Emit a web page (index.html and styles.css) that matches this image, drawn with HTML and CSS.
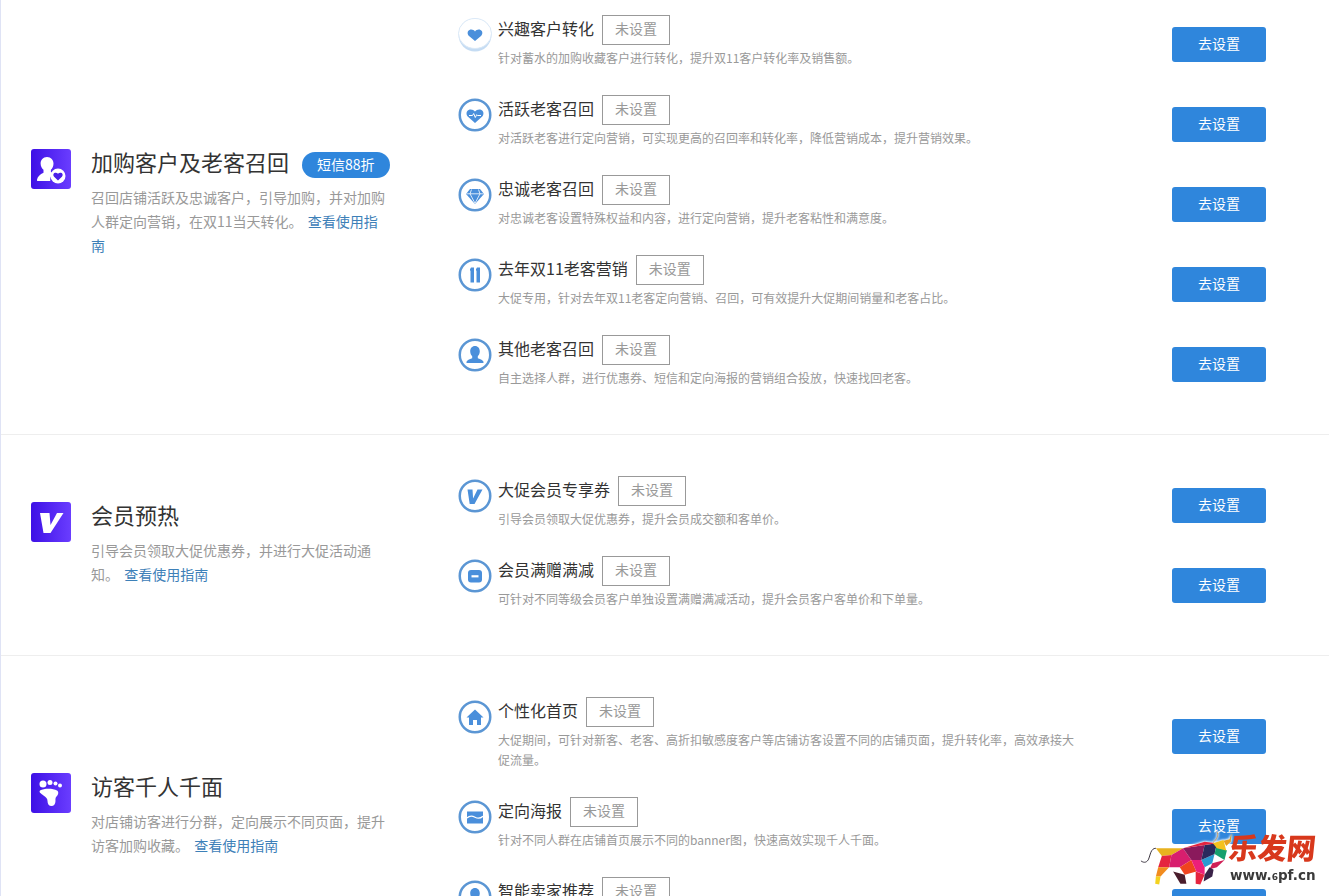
FILE: index.html
```html
<!DOCTYPE html>
<html lang="zh-CN">
<head>
    <meta charset="UTF-8">
    <title>双11客户运营</title>
    <link rel="stylesheet" href="styles.css">
</head>
<body>
    <div class="page">
        <!-- 加购客户及老客召回 -->
        <section class="group">
            <div class="group-info">
                <div class="group-icon">
                    <svg viewBox="0 0 40 40" width="40" height="40">
                        <path fill="#fff" d="M16 8c4 0 6.500 3 6.500 6.500 0 3-1.200 5-2.600 6.200v2.200c1 .5 1.900 1 2.600 1.300-2 1.500-3.300 3.800-3.300 6.300 0 .5 0 1 .1 1.500H7c-.8 0-1.200-.5-1-1.300.5-3 3-5.500 6.500-7v-3c-1.500-1.200-2.900-3.200-2.900-6.200C9.600 11 12 8 16 8z"/>
                        <circle cx="27" cy="27" r="7.500" fill="#fff"/>
                        <path fill="#4a1fe8" d="M27 31.500l-3.900-3.800c-1.100-1.100-1-2.800.2-3.600 1.200-.8 2.700-.5 3.700.7 1-1.200 2.500-1.500 3.700-.7 1.200.8 1.300 2.500.2 3.600z"/>
                    </svg>
                </div>
                <div class="group-text">
                    <div class="group-title">
                        <h2>加购客户及老客召回</h2>
                        <span class="badge">短信88折</span>
                    </div>
                    <p>召回店铺活跃及忠诚客户，引导加购，并对加购人群定向营销，在双11当天转化。 <a href="#">查看使用指南</a></p>
                </div>
            </div>
            <div class="group-list">
                <div class="item">
                    <svg class="item-icon" viewBox="0 0 34 34" width="34" height="34">
                        <circle cx="17" cy="17" r="16.500" fill="#c5dcf3"/>
                        <ellipse cx="17" cy="15.500" rx="16.500" ry="15" fill="#fff" stroke="#dbe9f7"/>
                        <path fill="#4a8fdb" d="M17 23l-6-5c-2-2-1.700-5 .5-6 2-.9 4.200-.2 5.500 1.500 1.300-1.700 3.500-2.400 5.500-1.500 2.200 1 2.500 4 .5 6z"/>
                    </svg>
                    <div class="item-body">
                        <div class="item-head"><h3>兴趣客户转化</h3><span class="tag">未设置</span></div>
                        <p>针对蓄水的加购收藏客户进行转化，提升双11客户转化率及销售额。</p>
                    </div>
                    <a class="btn" href="#">去设置</a>
                </div>
                <div class="item">
                    <svg class="item-icon" viewBox="0 0 34 34" width="34" height="34">
                        <circle cx="17" cy="17" r="15.250" fill="#fff" stroke="#5b96d4" stroke-width="2.500"/>
                        <path fill="#4a8fdb" d="M17 25l-7-6.200c-2.200-2.400-1.800-5.700.6-6.900 2.300-1.100 4.900-.3 6.400 1.700 1.500-2 4.100-2.800 6.400-1.700 2.400 1.200 2.800 4.500.6 6.900z"/>
                        <path fill="none" stroke="#fff" d="M11 17.500h3.500l1.200-2 1.600 4 1.400-2.800.8.800H23"/>
                    </svg>
                    <div class="item-body">
                        <div class="item-head"><h3>活跃老客召回</h3><span class="tag">未设置</span></div>
                        <p>对活跃老客进行定向营销，可实现更高的召回率和转化率，降低营销成本，提升营销效果。</p>
                    </div>
                    <a class="btn" href="#">去设置</a>
                </div>
                <div class="item">
                    <svg class="item-icon" viewBox="0 0 34 34" width="34" height="34">
                        <circle cx="17" cy="17" r="15.250" fill="#fff" stroke="#5b96d4" stroke-width="2.500"/>
                        <path fill="#4a8fdb" d="M12 11h10l4 5-9 10-9-10z"/>
                        <path fill="none" stroke="#fff" stroke-width=".8" d="M8.500 15.800h17M13.500 11.500l-1.500 4.300 5 9.500 5-9.500-1.500-4.300"/>
                    </svg>
                    <div class="item-body">
                        <div class="item-head"><h3>忠诚老客召回</h3><span class="tag">未设置</span></div>
                        <p>对忠诚老客设置特殊权益和内容，进行定向营销，提升老客粘性和满意度。</p>
                    </div>
                    <a class="btn" href="#">去设置</a>
                </div>
                <div class="item">
                    <svg class="item-icon" viewBox="0 0 34 34" width="34" height="34">
                        <circle cx="17" cy="17" r="15.250" fill="#fff" stroke="#5b96d4" stroke-width="2.500"/>
                        <path fill="#4a8fdb" d="M13 9.500h3v15h-3.500V12.500l-.5.200v-1.500zM19 9.500h3v15h-3.500V12.500l-.5.200v-1.500z"/>
                    </svg>
                    <div class="item-body">
                        <div class="item-head"><h3>去年双11老客营销</h3><span class="tag">未设置</span></div>
                        <p>大促专用，针对去年双11老客定向营销、召回，可有效提升大促期间销量和老客占比。</p>
                    </div>
                    <a class="btn" href="#">去设置</a>
                </div>
                <div class="item">
                    <svg class="item-icon" viewBox="0 0 34 34" width="34" height="34">
                        <circle cx="17" cy="17" r="15.250" fill="#fff" stroke="#5b96d4" stroke-width="2.500"/>
                        <path fill="#4a8fdb" d="M17 8c3 0 4.800 2.300 4.800 5.200 0 2.200-.9 3.900-2 5v2c2.800 1 5.200 1.800 5.700 3.600.2.800 0 1.200-.8 1.200H9.300c-.8 0-1-.4-.8-1.200.5-1.800 2.900-2.600 5.700-3.600v-2c-1.100-1.100-2-2.800-2-5C12.200 10.300 14 8 17 8z"/>
                    </svg>
                    <div class="item-body">
                        <div class="item-head"><h3>其他老客召回</h3><span class="tag">未设置</span></div>
                        <p>自主选择人群，进行优惠券、短信和定向海报的营销组合投放，快速找回老客。</p>
                    </div>
                    <a class="btn" href="#">去设置</a>
                </div>
            </div>
        </section>

        <!-- 会员预热 -->
        <section class="group">
            <div class="group-info">
                <div class="group-icon">
                    <svg viewBox="0 0 40 40" width="40" height="40">
                        <path fill="#fff" d="M9 11h9.500l1 12L26 11h6.500L19.500 31H12.500z"/>
                    </svg>
                </div>
                <div class="group-text">
                    <div class="group-title">
                        <h2>会员预热</h2>
                    </div>
                    <p>引导会员领取大促优惠券，并进行大促活动通知。 <a href="#">查看使用指南</a></p>
                </div>
            </div>
            <div class="group-list">
                <div class="item">
                    <svg class="item-icon" viewBox="0 0 34 34" width="34" height="34">
                        <circle cx="17" cy="17" r="15.250" fill="#fff" stroke="#5b96d4" stroke-width="2.500"/>
                        <path fill="#4a8fdb" d="M9.500 10.500h5l.6 9 4.400-9h5L16.500 25h-4.800z"/>
                    </svg>
                    <div class="item-body">
                        <div class="item-head"><h3>大促会员专享券</h3><span class="tag">未设置</span></div>
                        <p>引导会员领取大促优惠券，提升会员成交额和客单价。</p>
                    </div>
                    <a class="btn" href="#">去设置</a>
                </div>
                <div class="item">
                    <svg class="item-icon" viewBox="0 0 34 34" width="34" height="34">
                        <circle cx="17" cy="17" r="15.250" fill="#fff" stroke="#5b96d4" stroke-width="2.500"/>
                        <rect x="10" y="11" width="14" height="12.500" rx="3" fill="#4a8fdb"/>
                        <rect x="13.500" y="16.200" width="7" height="2.200" fill="#fff"/>
                    </svg>
                    <div class="item-body">
                        <div class="item-head"><h3>会员满赠满减</h3><span class="tag">未设置</span></div>
                        <p>可针对不同等级会员客户单独设置满赠满减活动，提升会员客户客单价和下单量。</p>
                    </div>
                    <a class="btn" href="#">去设置</a>
                </div>
            </div>
        </section>

        <!-- 访客千人千面 -->
        <section class="group">
            <div class="group-info">
                <div class="group-icon">
                    <svg viewBox="0 0 40 40" width="40" height="40">
                        <g fill="#fff">
                            <circle cx="12" cy="11" r="3.500"/>
                            <circle cx="19" cy="9.500" r="2.500"/>
                            <circle cx="24.500" cy="10.500" r="2"/>
                            <circle cx="29" cy="12.500" r="2"/>
                            <path d="M9 17.500c4-2.500 13-2.500 17 0 2 1.300 1.500 4-.5 6-1.300 1.300-1 3-1 4.500 0 3-1.700 5-4 5-2.500 0-4-2-4-5 0-2.500-1.500-3.500-4-5.500-2.200-1.700-5-3.300-3.500-5z"/>
                        </g>
                    </svg>
                </div>
                <div class="group-text">
                    <div class="group-title">
                        <h2>访客千人千面</h2>
                    </div>
                    <p>对店铺访客进行分群，定向展示不同页面，提升访客加购收藏。 <a href="#">查看使用指南</a></p>
                </div>
            </div>
            <div class="group-list">
                <div class="item">
                    <svg class="item-icon" viewBox="0 0 34 34" width="34" height="34">
                        <circle cx="17" cy="17" r="15.250" fill="#fff" stroke="#5b96d4" stroke-width="2.500"/>
                        <path fill="#4a8fdb" d="M17 9.500l8.500 8h-2.500v7.500h-4v-5h-4v5h-4v-7.500H8.500z"/>
                    </svg>
                    <div class="item-body">
                        <div class="item-head"><h3>个性化首页</h3><span class="tag">未设置</span></div>
                        <p>大促期间，可针对新客、老客、高折扣敏感度客户等店铺访客设置不同的店铺页面，提升转化率，高效承接大促流量。</p>
                    </div>
                    <a class="btn" href="#">去设置</a>
                </div>
                <div class="item">
                    <svg class="item-icon" viewBox="0 0 34 34" width="34" height="34">
                        <circle cx="17" cy="17" r="15.250" fill="#fff" stroke="#5b96d4" stroke-width="2.500"/>
                        <rect x="9" y="11.500" width="16" height="12" fill="#4a8fdb"/>
                        <path fill="none" stroke="#fff" stroke-width="1.200" d="M9 18c2.500-2.500 5-2.500 8-.8s5.500 1.300 8-1"/>
                    </svg>
                    <div class="item-body">
                        <div class="item-head"><h3>定向海报</h3><span class="tag">未设置</span></div>
                        <p>针对不同人群在店铺首页展示不同的banner图，快速高效实现千人千面。</p>
                    </div>
                    <a class="btn" href="#">去设置</a>
                </div>
                <div class="item">
                    <svg class="item-icon" viewBox="0 0 34 34" width="34" height="34">
                        <circle cx="17" cy="17" r="15.250" fill="#fff" stroke="#5b96d4" stroke-width="2.500"/>
                        <path fill="#4a8fdb" d="M17 8c3 0 4.800 2.300 4.800 5.200 0 2.200-.9 3.900-2 5v2c2.800 1 5.200 1.800 5.700 3.600.2.800 0 1.200-.8 1.200H9.300c-.8 0-1-.4-.8-1.200.5-1.800 2.900-2.600 5.700-3.600v-2c-1.100-1.100-2-2.800-2-5C12.200 10.300 14 8 17 8z"/>
                    </svg>
                    <div class="item-body">
                        <div class="item-head"><h3>智能卖家推荐</h3><span class="tag">未设置</span></div>
                        <p>&nbsp;</p>
                    </div>
                    <a class="btn" href="#">去设置</a>
                </div>
            </div>
        </section>
    </div>

    <!-- 水印 -->
    <div class="watermark">
        <svg class="bull" viewBox="0 0 600 348" width="199" height="116">
            <path fill="none" stroke="#3a3440" stroke-width="3" d="M78 205C62 205 62 225 55 240 48 250 40 248 33 243"/>
            <polygon fill="#e8b21f" points="78,205 160,205 125,225 96,228"/>
            <polygon fill="#e5243f" points="96,228 125,225 118,262 85,262"/>
            <polygon fill="#f28c1e" points="85,262 118,262 92,290 78,290"/>
            <polygon fill="#f4d21f" points="78,290 92,290 88,314 76,312"/>
            <polygon fill="#d81e6e" points="125,225 160,205 185,240 150,262 118,262"/>
            <polygon fill="#8a1a5c" points="160,205 225,195 215,240 185,240"/>
            <polygon fill="#f0441f" points="150,262 185,240 200,275 165,285"/>
            <polygon fill="#4a1d2c" points="130,275 165,285 170,312 152,312"/>
            <polygon fill="#2b9ad0" points="215,240 255,222 248,250 225,262"/>
            <polygon fill="#2a2a5c" points="225,195 262,190 255,222 215,240"/>
            <polygon fill="#e5243f" points="160,205 225,185 262,190 225,195"/>
            <polygon fill="#ec1f7a" points="185,240 215,240 225,262 225,285 200,275"/>
            <polygon fill="#e5243f" points="198,275 225,285 212,314 198,312"/>
            <polygon fill="#16a06e" points="262,190 292,212 285,240 255,222"/>
            <polygon fill="#f4c21f" points="250,190 282,180 290,212 262,205"/>
            <polygon fill="#cf1f55" points="248,250 285,240 262,262 240,268"/>
            <polygon fill="#3a2248" points="225,285 240,262 252,270 248,290 222,305"/>
            <polygon fill="#e8a01f" points="282,182 300,178 306,160 304,185 290,198"/>
            <path fill="none" stroke="#c9a06a" stroke-width="3" d="M250 188C262 178 268 165 262 155"/>
        </svg>
        <span class="wm-name">乐发网</span>
        <span class="wm-url">www.<small>6</small>pf.cn</span>
    </div>
</body>
</html>
```

FILE: styles.css
```css
/* 页面基础 */
html, body {
    height: 100%;
}

body {
    margin: 0;
    overflow: hidden;
    background: #fff;
    color: #333;
    font-family: "Noto Sans CJK SC", "Microsoft YaHei", sans-serif;
    font-size: 14px;
}

.page {
    margin-top: -26px;
    border-left: 1px solid #dfe3f5;
}

h2, h3, p {
    margin: 0;
    font-weight: normal;
}

a {
    text-decoration: none;
}

/* 分组 */
.group {
    display: flex;
    align-items: center;
    padding: 41px 0 39px;
    border-bottom: 1px solid #eeeeee;
}

.group-info {
    display: flex;
    flex: none;
    box-sizing: border-box;
    width: 457px;
    margin-bottom: 4px;
    padding-left: 30px;
}

.group-icon {
    flex: none;
    width: 40px;
    height: 40px;
    margin-right: 20px;
    border-radius: 3px;
    background: linear-gradient(90deg, #3d10e6, #6a3dff);
}

.group-icon svg {
    display: block;
}

.group-text {
    width: 300px;
}

.group-title {
    display: flex;
    align-items: center;
    height: 30px;
    margin-bottom: 6px;
}

.group-title h2 {
    margin-bottom: 6px;
    font-size: 22px;
    line-height: 24px;
    color: #333;
}

.badge {
    height: 26px;
    margin: 2px 0 0 13px;
    padding: 0 15px;
    border-radius: 13px;
    background: #2f86dc;
    line-height: 25px;
    color: #fff;
}

.group-text p {
    line-height: 24px;
    color: #999;
}

.group-text a {
    margin-left: 2px;
    color: #3d80b8;
}

/* 列表项 */
.group-list {
    flex: 1;
    min-width: 0;
}

.item {
    display: flex;
    align-items: center;
    margin-bottom: 20px;
    padding-right: 63px;
}

.item:last-child {
    margin-bottom: 0;
}

.item-icon {
    flex: none;
    align-self: flex-start;
    margin: 3px 6px 0 0;
}

.item-body {
    width: 580px;
    padding-bottom: 7px;
}

.item-head {
    display: flex;
    align-items: center;
    height: 30px;
    margin-bottom: 3px;
}

.item-head h3 {
    margin-bottom: 4px;
    font-size: 16px;
    line-height: 24px;
    color: #333;
}

.tag {
    box-sizing: border-box;
    width: 68px;
    height: 30px;
    margin-left: 8px;
    border: 1px solid #999;
    line-height: 24px;
    text-align: center;
    color: #999;
}

.item-body p {
    font-size: 12px;
    line-height: 20px;
    color: #999;
}

.btn {
    flex: none;
    width: 94px;
    height: 35px;
    margin-bottom: 1px;
    margin-left: auto;
    border-radius: 3px;
    background: #2f86dc;
    line-height: 33px;
    text-align: center;
    color: #fff;
}

/* 水印 */
.watermark {
    position: fixed;
    right: 0;
    bottom: 0;
    width: 199px;
    height: 116px;
}

.bull {
    display: block;
    filter: drop-shadow(0 0 1px #fff) drop-shadow(0 0 1px #fff);
}

.wm-name {
    position: absolute;
    left: 99px;
    top: 49px;
    font-size: 29px;
    line-height: 34px;
    font-weight: 900;
    color: #d8381c;
    transform: skewX(-6deg);
}

.wm-url {
    position: absolute;
    left: 100px;
    top: 87px;
    font-family: "DejaVu Sans", sans-serif;
    font-size: 13.500px;
    line-height: 16px;
    font-weight: bold;
    color: #3a3a3a;
}

.wm-url small {
    font-size: 9px;
}
```
